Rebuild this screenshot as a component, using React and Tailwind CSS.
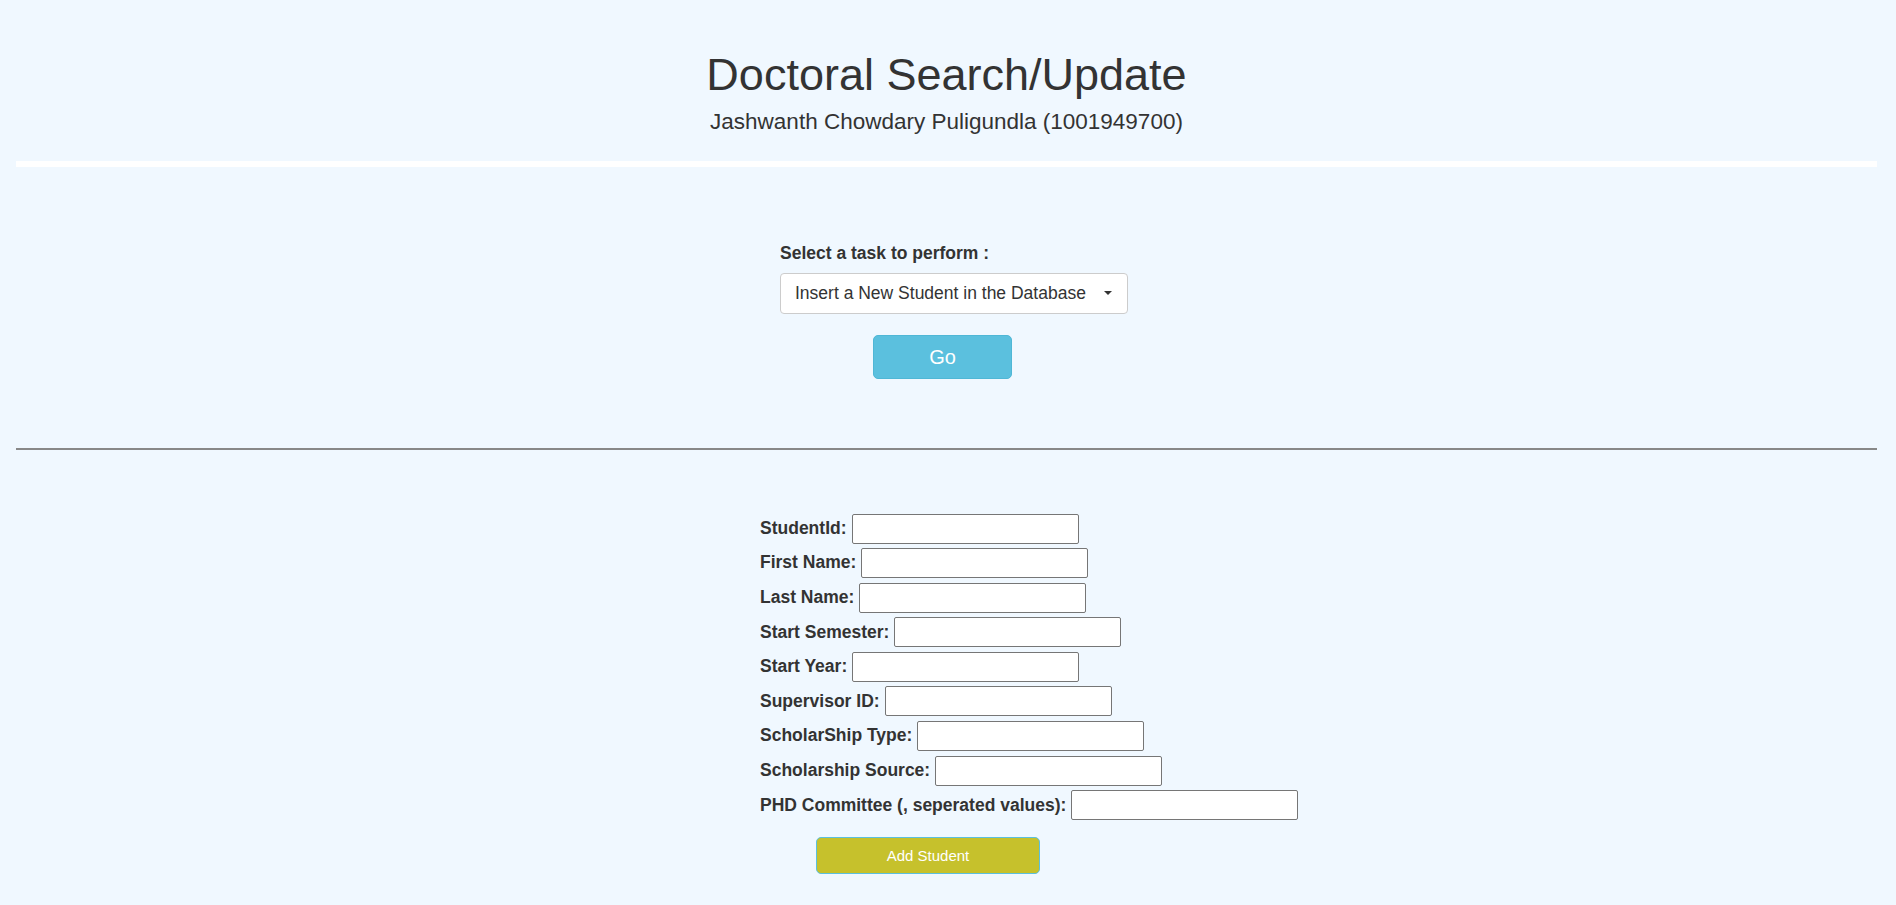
import React, { useState } from "react";

const fields = [
  "StudentId:",
  "First Name:",
  "Last Name:",
  "Start Semester:",
  "Start Year:",
  "Supervisor ID:",
  "ScholarShip Type:",
  "Scholarship Source:",
  "PHD Committee (, seperated values):",
];

const App = () => {
  const [task, setTask] = useState("insert");

  return (
    <div
      className="min-h-screen bg-[#f0f8ff] pl-4 pr-[19px] text-[#333]"
      style={{ fontFamily: '"Liberation Sans", Arial, sans-serif' }}
    >
      {/* Header */}
      <div className="flex flex-col items-center">
        <h1 className="mt-[52px] text-[45px] leading-none font-normal">Doctoral Search/Update</h1>
        <div className="mt-[14px] text-[22.5px] leading-none">Jashwanth Chowdary Puligundla (1001949700)</div>
      </div>
      <div className="mt-[27.5px] h-[6px] bg-white" />

      {/* Task selection */}
      <div className="mx-auto w-[373px]">
        <div className="ml-[20px] mt-[78px] w-[348px]">
          <div className="text-[17.5px] leading-none font-bold">Select a task to perform :</div>
          <div className="relative mt-[10px] h-[41px]">
            <select
              value={task}
              onChange={(e) => setTask(e.target.value)}
              className="block h-[41px] w-[348px] appearance-none rounded-[4px] border border-[#ccc] bg-white pl-[14px] text-[17.5px] text-[#333] outline-none"
            >
              <option value="insert">Insert a New Student in the Database</option>
              <option value="search">Search a Student</option>
              <option value="update">Update a Student</option>
            </select>
            <span className="pointer-events-none absolute right-[16px] top-[18px] h-0 w-0 border-x-[4px] border-t-[4.5px] border-x-transparent border-t-[#333]" />
          </div>
        </div>
        <button className="ml-[113px] mt-[21px] flex h-[44px] w-[139px] items-center justify-center rounded-[5px] border border-[#4fb7d6] bg-[#5bc0de] text-[20px] text-white">
          Go
        </button>
      </div>

      <div className="mt-[69px] h-[2px] bg-[#888]" />

      {/* Student form */}
      <div className="mx-auto mt-[64px] w-[373px] pb-4">
        <div className="flex flex-col gap-[4.6px]">
          {fields.map((f) => (
            <div key={f} className="flex h-[30px] items-center whitespace-nowrap">
              <label className="text-[17.5px] leading-none font-bold">{f}</label>
              <input
                type="text"
                className="ml-[5px] h-[30px] w-[227px] shrink-0 rounded-[2px] border border-[#767676] bg-white px-1 outline-none"
              />
            </div>
          ))}
        </div>
        <button className="ml-[56px] mt-[17px] flex h-[37px] w-[224px] items-center justify-center rounded-[5px] border border-[#5bc0de] bg-[#c6c12c] text-[15px] text-white">
          Add Student
        </button>
      </div>
    </div>
  );
};

export default App;
